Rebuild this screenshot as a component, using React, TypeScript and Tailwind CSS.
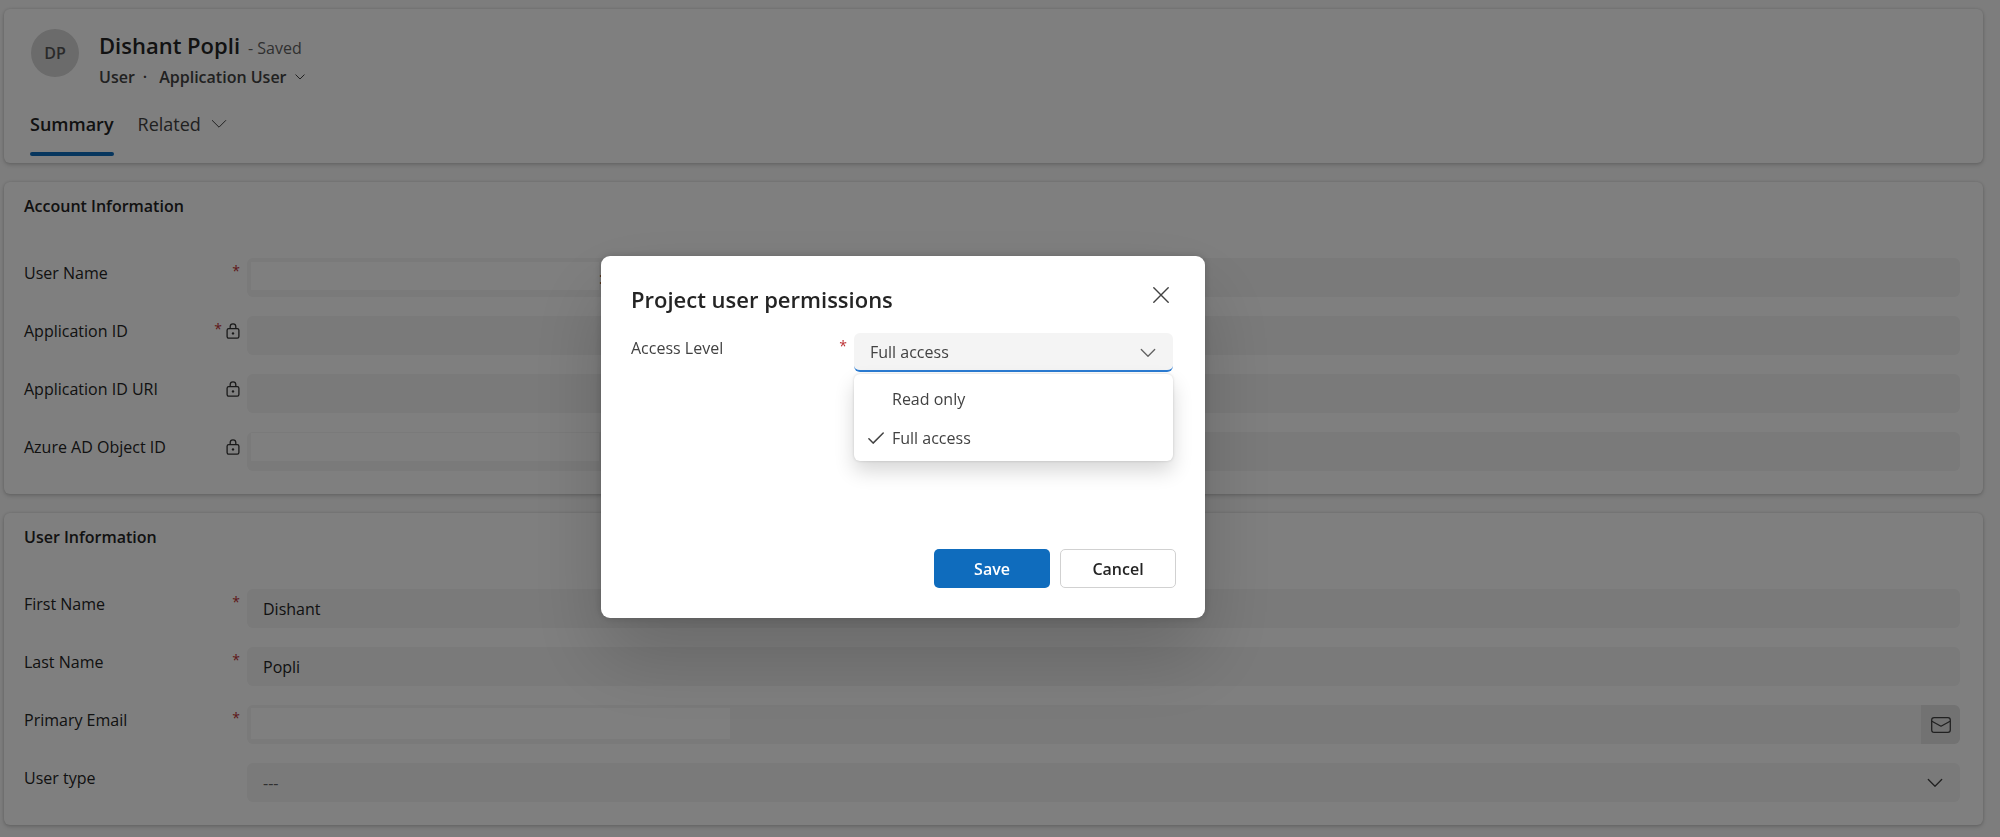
import type { ReactNode } from "react";

function Chevron({ className }: { className: string }) {
  return (
    <svg viewBox="0 0 16 16" fill="none" stroke="currentColor" strokeLinecap="round" strokeLinejoin="round" className={className} aria-hidden="true">
      <path d="M1.300 4.500 8 11.200l6.700-6.700" />
    </svg>
  );
}

function LockIcon() {
  return (
    <svg viewBox="0 0 14 16" fill="none" stroke="currentColor" strokeWidth="1.3" className="h-4 w-3.5 text-[#333]" aria-hidden="true">
      <rect x="1.100" y="5.600" width="11.800" height="9.600" rx="1.600" />
      <path d="M4.200 5.600V3.600a2.800 2.800 0 0 1 5.600 0v2" />
      <circle cx="7" cy="10.400" r="1.200" fill="currentColor" stroke="none" />
    </svg>
  );
}

function Star() {
  return <span className="text-sm leading-5 text-[#bc2f32]">*</span>;
}

type RowProps = { id: string; label: string; required?: boolean; locked?: boolean; children: ReactNode };

function Row({ id, label, required, locked, children }: RowProps) {
  return (
    <div className="flex h-[39px] items-start">
      <div className="flex w-[223px] shrink-0 items-start justify-between pt-[3px] pr-[7px]">
        <label htmlFor={id} className="text-base leading-6 text-[#242424]">{label}</label>
        <span className="flex items-start gap-1">
          {required && <Star />}
          {locked && <span className="pt-1"><LockIcon /></span>}
        </span>
      </div>
      <div className="flex h-full min-w-0 flex-1 items-stretch overflow-hidden rounded-md bg-[#f4f4f4]">{children}</div>
    </div>
  );
}

const inputClass = "min-w-0 flex-1 bg-transparent px-4 text-base text-[#242424] outline-none";

function Section({ title, children }: { title: string; children: ReactNode }) {
  return (
    <section className="rounded-md bg-white pt-3 pr-[23px] pb-[23px] pl-5 shadow-[0_2px_4px_rgba(0,0,0,0.16),0_0_3px_rgba(0,0,0,0.14)]">
      <h2 className="text-base leading-6 font-semibold text-[#242424]">{title}</h2>
      <div className="mt-10 flex flex-col gap-[19px]">{children}</div>
    </section>
  );
}

export default function App() {
  return (
    <div className="relative min-h-screen bg-[#fafafa] font-['Open_Sans','Noto_Sans',sans-serif]">
      <main className="flex flex-col gap-[19px] pt-[9px] pr-[17px] pb-3 pl-1">
        <header className="rounded-md bg-white px-[26px] pt-5 pb-[7px] shadow-[0_2px_4px_rgba(0,0,0,0.16),0_0_3px_rgba(0,0,0,0.14)]">
          <div className="flex items-start gap-5">
            <div className="ml-px flex size-12 items-center justify-center rounded-full bg-[#d6d6d6] text-base font-semibold text-[#555]">DP</div>
            <div>
              <div className="flex items-baseline gap-2">
                <h1 className="text-[22px] leading-8 font-semibold text-[#242424]">Dishant Popli</h1>
                <span className="text-base text-[#616161]">- Saved</span>
              </div>
              <div className="flex items-center text-base leading-8 font-semibold text-[#424242]">
                <span>User</span>
                <span className="mr-3 ml-2">·</span>
                <button type="button" className="flex items-center gap-2">
                  Application User
                  <Chevron className="size-2.5 stroke-[1.6]" />
                </button>
              </div>
            </div>
          </div>
          <nav className="mt-[17px] flex items-start gap-6 text-lg leading-7">
            <button type="button" className="font-semibold text-[#242424]">
              Summary
              <span className="mt-[14px] block h-1 rounded-full bg-[#0f6cbd]" />
            </button>
            <button type="button" className="flex items-center gap-2.5 text-[#424242]">
              Related
              <Chevron className="size-4" />
            </button>
          </nav>
        </header>

        <Section title="Account Information">
          <Row id="user-name" label="User Name" required>
            <div className="mt-1 mb-[7px] ml-1 w-[348px] bg-white" />
            <input id="user-name" defaultValue=":" className="min-w-0 flex-1 bg-transparent text-base text-[#242424] outline-none" />
          </Row>
          <Row id="app-id" label="Application ID" required locked>
            <input id="app-id" readOnly className={inputClass} />
          </Row>
          <Row id="app-uri" label="Application ID URI" locked>
            <input id="app-uri" readOnly className={inputClass} />
          </Row>
          <Row id="object-id" label="Azure AD Object ID" locked>
            <div className="mt-px mb-[10px] ml-1 w-[348px] bg-white" />
            <input id="object-id" readOnly className={inputClass} />
          </Row>
        </Section>

        <Section title="User Information">
          <Row id="first-name" label="First Name" required>
            <input id="first-name" defaultValue="Dishant" className={inputClass} />
          </Row>
          <Row id="last-name" label="Last Name" required>
            <input id="last-name" defaultValue="Popli" className={inputClass} />
          </Row>
          <Row id="email" label="Primary Email" required>
            <div className="mt-[3px] mb-[5px] ml-1 w-[479px] bg-white" />
            <input id="email" type="email" className={inputClass} />
            <button type="button" aria-label="Send email" className="flex w-[39px] items-center justify-center bg-[#e4e4e4] text-[#424242]">
              <svg viewBox="0 0 20 16" fill="none" stroke="currentColor" strokeWidth="1.300" strokeLinejoin="round" className="h-4 w-5" aria-hidden="true">
                <rect x="0.700" y="0.700" width="18.600" height="14.600" rx="2.400" />
                <path d="m0.900 4.200 9.100 5 9.100-5" />
              </svg>
            </button>
          </Row>
          <Row id="user-type" label="User type">
            <div className="relative flex flex-1 items-center">
              <select id="user-type" className="h-full w-full appearance-none bg-transparent px-4 text-base text-[#616161] outline-none">
                <option>---</option>
              </select>
              <Chevron className="pointer-events-none absolute right-[17px] size-4 stroke-[1.3] text-[#424242]" />
            </div>
          </Row>
        </Section>
      </main>

      <div className="fixed inset-0 flex items-start justify-center bg-black/50 pt-64 pr-[194px]">
        <div role="dialog" aria-modal="true" aria-labelledby="dialog-title" className="flex min-h-[362px] w-[604px] flex-col rounded-[9px] bg-white pt-[27px] pr-[29px] pb-[30px] pl-[30px] shadow-[0_38px_77px_rgba(0,0,0,0.18),0_0_10px_rgba(0,0,0,0.18)]">
          <div className="flex items-start justify-between">
            <h2 id="dialog-title" className="text-[22px] leading-8 font-semibold text-[#242424]">Project user permissions</h2>
            <button type="button" aria-label="Close" className="mr-[3px] p-1 text-[#424242]">
              <svg viewBox="0 0 16 16" stroke="currentColor" strokeWidth="1.400" strokeLinecap="round" className="size-4" aria-hidden="true">
                <path d="m0.800 0.800 14.400 14.400M15.200 0.800 0.800 15.200" />
              </svg>
            </button>
          </div>
          <div className="mt-[18px] flex items-start">
            <div className="flex w-[223px] shrink-0 justify-between pt-[3px] pr-[7px]">
              <label htmlFor="access-level" className="text-base leading-6 text-[#424242]">Access Level</label>
              <Star />
            </div>
            <div className="relative mr-[3px] flex-1">
              <select id="access-level" defaultValue="Full access" className="block h-[39px] w-full appearance-none rounded-md border-b-2 border-[#2b7cd3] bg-[#f4f4f4] px-4 text-base text-[#424242] outline-none">
                <option>Read only</option>
                <option>Full access</option>
              </select>
              <Chevron className="pointer-events-none absolute top-3 right-[17px] size-4 stroke-[1.3] text-[#616161]" />
              <ul role="listbox" aria-label="Access Level" className="absolute inset-x-0 top-full mt-0.5 rounded-md bg-white py-1 pt-[5px] text-base text-[#424242] shadow-[0_10px_20px_rgba(0,0,0,0.16),0_0_3px_rgba(0,0,0,0.16)]">
                <li role="option" aria-selected="false" className="flex h-[39px] items-center pl-[38px]">Read only</li>
                <li role="option" aria-selected="true" className="flex h-[39px] items-center gap-2 pl-[14px]">
                  <svg viewBox="0 0 16 12" fill="none" stroke="currentColor" strokeWidth="1.500" strokeLinecap="round" strokeLinejoin="round" className="h-3 w-4" aria-hidden="true">
                    <path d="m0.900 6.800 4.200 4.300L15.200 1" />
                  </svg>
                  Full access
                </li>
              </ul>
            </div>
          </div>
          <div className="mt-auto flex justify-end gap-[10px] text-base font-semibold">
            <button type="button" className="h-[39px] w-[116px] rounded-[5px] bg-[#0f6cbd] text-white">Save</button>
            <button type="button" className="h-[39px] w-[116px] rounded-[5px] border border-[#d1d1d1] bg-white text-[#242424]">Cancel</button>
          </div>
        </div>
      </div>
    </div>
  );
}
